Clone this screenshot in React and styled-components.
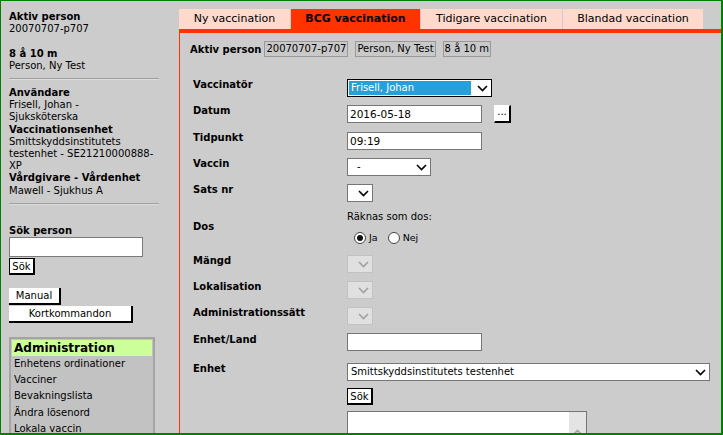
import React from 'react'
import styled, { createGlobalStyle } from 'styled-components'

const GlobalStyle = createGlobalStyle`
  html, body {
    margin: 0;
    padding: 0;
    background: #cccccc;
  }
  body {
    font-family: "DejaVu Sans", Verdana, sans-serif;
    font-size: 10px;
    color: #000;
  }
  * {
    box-sizing: border-box;
  }
`;

const tabs = [
  { label: 'Ny vaccination', w: 111 },
  { label: 'BCG vaccination', w: 129, active: true },
  { label: 'Tidigare vaccination', w: 141 },
  { label: 'Blandad vaccination', w: 140 },
];

const adminItems = [
  'Enhetens ordinationer',
  'Vacciner',
  'Bevakningslista',
  'Ändra lösenord',
  'Lokala vaccin',
];

function Chevron({ disabled }) {
  return (
    <ChevronSvg viewBox="0 0 11 7" $disabled={disabled}>
      <path d="M1 1 L5.5 5.5 L10 1" fill="none" stroke="currentColor" strokeWidth="1.6" />
    </ChevronSvg>
  );
}

function Select({ w, value, disabled, focused, pl }) {
  return (
    <SelectBox $w={w} $disabled={disabled} $focused={focused}>
      <SelectValue $focused={focused} $pl={pl}>{value}</SelectValue>
      <Chevron disabled={disabled} />
    </SelectBox>
  );
}

function Radio({ checked, label }) {
  return (
    <RadioLabel>
      <RadioDot $checked={checked} />
      {label}
    </RadioLabel>
  );
}

export default function App() {
  return (
    <>
      <GlobalStyle />
      <Frame>
        <Sidebar>
          <Block>
            <b>Aktiv person</b><br />
            20070707-p707<br />
            <br />
            <b>8 å 10 m</b><br />
            Person, Ny Test
          </Block>
          <Rule />
          <Block $mt={7}>
            <b>Användare</b><br />
            Frisell, Johan -<br />
            Sjuksköterska<br />
            <b>Vaccinationsenhet</b><br />
            Smittskyddsinstitutets<br />
            testenhet - SE21210000888-<br />
            XP<br />
            <b>Vårdgivare - Vårdenhet</b><br />
            Mawell - Sjukhus A
          </Block>
          <Rule />
          <Block $mt={20}>
            <b>Sök person</b>
          </Block>
          <SideInput type="text" />
          <SideButton $framed $w={26}>Sök</SideButton>
          <ButtonStack>
            <SideButton $w={52}>Manual</SideButton>
            <SideButton $w={124}>Kortkommandon</SideButton>
          </ButtonStack>
          <AdminBox>
            <AdminHeader>Administration</AdminHeader>
            {adminItems.map((item) => (
              <AdminItem key={item}>{item}</AdminItem>
            ))}
          </AdminBox>
        </Sidebar>

        <Main>
          <TabBar>
            {tabs.map((t) => (
              <Tab key={t.label} $w={t.w} $active={t.active}>{t.label}</Tab>
            ))}
          </TabBar>
          <Panel>
            <ActiveBar>
              <b>Aktiv person</b>
              <InfoBox $ml={3}>20070707-p707</InfoBox>
              <InfoBox $ml={7}>Person, Ny Test</InfoBox>
              <InfoBox $ml={7}>8 å 10 m</InfoBox>
            </ActiveBar>

            <Form>
              <Row $mt={0}>
                <Label>Vaccinatör</Label>
                <Field>
                  <Select w={145} value="Frisell, Johan" focused />
                </Field>
              </Row>
              <Row $mt={6}>
                <Label>Datum</Label>
                <Field>
                  <TextInput $w={135} defaultValue="2016-05-18" />
                  <DotsButton>...</DotsButton>
                </Field>
              </Row>
              <Row $mt={7}>
                <Label>Tidpunkt</Label>
                <Field>
                  <TextInput $w={135} defaultValue="09:19" />
                </Field>
              </Row>
              <Row $mt={6}>
                <Label>Vaccin</Label>
                <Field>
                  <Select w={84} value="-" pl={9} />
                </Field>
              </Row>
              <Row $mt={6}>
                <Label>Sats nr</Label>
                <Field>
                  <Select w={26} value="" />
                </Field>
              </Row>
              <Row $mt={5} $center>
                <Label $pt={0}>Dos</Label>
                <DosField>
                  <div>Räknas som dos:</div>
                  <RadioRow>
                    <Radio checked label="Ja" />
                    <Radio label="Nej" />
                  </RadioRow>
                </DosField>
              </Row>
              <Row $mt={6}>
                <Label>Mängd</Label>
                <Field>
                  <Select w={26} value="" disabled />
                </Field>
              </Row>
              <Row $mt={6}>
                <Label>Lokalisation</Label>
                <Field>
                  <Select w={26} value="" disabled />
                </Field>
              </Row>
              <Row $mt={6}>
                <Label>Administrationssätt</Label>
                <Field>
                  <Select w={26} value="" disabled />
                </Field>
              </Row>
              <Row $mt={7}>
                <Label>Enhet/Land</Label>
                <Field $pt={1}>
                  <TextInput $w={135} />
                </Field>
              </Row>
              <Row $mt={10}>
                <Label>Enhet</Label>
                <Field>
                  <Select w={363} value="Smittskyddsinstitutets testenhet" pl={3} />
                </Field>
              </Row>
              <Row $mt={4}>
                <Label />
                <Field>
                  <SideButton $framed $w={26}>Sök</SideButton>
                </Field>
              </Row>
              <Row $mt={4}>
                <Label />
                <Field>
                  <ListBox>
                    <ScrollTrack>
                      <ScrollArrow viewBox="0 0 9 6">
                        <path d="M1 5 L4.5 1.5 L8 5" fill="none" stroke="currentColor" strokeWidth="1.6" />
                      </ScrollArrow>
                    </ScrollTrack>
                  </ListBox>
                </Field>
              </Row>
            </Form>
          </Panel>
        </Main>
      </Frame>
    </>
  );
}

const Frame = styled.div`
  width: 723px;
  height: 435px;
  display: flex;
  overflow: hidden;
  background: #cccccc;
  border-top: 1px solid #008000;
  border-left: 1px solid #008000;
  border-right: 2px solid #008000;
  border-bottom: 2px solid #008000;
`;

const Sidebar = styled.div`
  width: 178px;
  flex-shrink: 0;
  padding: 10px 0 0 8px;
  line-height: 12.2px;
`;

const Block = styled.div`
  margin-top: ${(p) => p.$mt || 0}px;
  white-space: nowrap;
`;

const Rule = styled.div`
  width: 150px;
  height: 2px;
  margin-top: 6px;
  border-top: 1px solid #a0a0a0;
  border-bottom: 1px solid #dcdcdc;
`;

const SideInput = styled.input`
  display: block;
  width: 134px;
  height: 20px;
  margin: 0;
  border: 1px solid #7a7a7a;
  background: #fff;
  padding: 0 2px;
  font: inherit;
`;

const SideButton = styled.button`
  display: block;
  width: ${(p) => p.$w}px;
  height: 17px;
  margin: 1px 0 0;
  padding: 0;
  background: #fff;
  color: #000;
  font-family: "DejaVu Sans", Verdana, sans-serif;
  font-size: 10px;
  line-height: 13px;
  text-align: center;
  border-style: solid;
  border-color: ${(p) => (p.$framed ? '#000' : '#fff')};
  border-width: ${(p) => (p.$framed ? '1px' : '0')};
  border-right: 2px solid #000;
  border-bottom: 2px solid #000;
`;

const ButtonStack = styled.div`
  margin-top: 13px;
`;

const AdminBox = styled.div`
  width: 146px;
  margin-top: 14px;
  border: 2px solid #a4a4a4;
  background: #c2c2c2;
  padding: 1px;
`;

const AdminHeader = styled.div`
  height: 16px;
  background: #ccff99;
  font-size: 12px;
  font-weight: bold;
  line-height: 16px;
  padding-left: 2px;
`;

const AdminItem = styled.div`
  line-height: 16.2px;
  padding-left: 2px;
  white-space: nowrap;
`;

const Main = styled.div`
  flex: 1;
  min-width: 0;
  display: flex;
  flex-direction: column;
  padding-top: 8px;
`;

const TabBar = styled.div`
  display: flex;
  gap: 1px;
  height: 20px;
`;

const Tab = styled.div`
  width: ${(p) => p.$w}px;
  height: 20px;
  line-height: 20px;
  text-align: center;
  font-size: 11px;
  white-space: nowrap;
  background: ${(p) => (p.$active ? '#ff3300' : '#ffd9cc')};
  font-weight: ${(p) => (p.$active ? 'bold' : 'normal')};
`;

const Panel = styled.div`
  flex: 1;
  border-top: 4px solid #ff3300;
  border-left: 1px solid #ff3300;
  padding: 8px 0 0 10px;
`;

const ActiveBar = styled.div`
  display: flex;
  align-items: center;
  height: 16px;
  white-space: nowrap;
`;

const InfoBox = styled.span`
  margin-left: ${(p) => p.$ml}px;
  height: 16px;
  line-height: 14px;
  padding: 0 1px;
  border: 1px solid #999;
  background: #c9c9c9;
`;

const Form = styled.div`
  margin-top: 20px;
  padding-left: 3px;
`;

const Row = styled.div`
  display: grid;
  grid-template-columns: 154px 1fr;
  align-items: ${(p) => (p.$center ? 'center' : 'start')};
  margin-top: ${(p) => p.$mt}px;
`;

const Label = styled.div`
  font-weight: bold;
  line-height: 12px;
  padding-top: ${(p) => (p.$pt !== undefined ? p.$pt : 2)}px;
  white-space: nowrap;
`;

const Field = styled.div`
  display: flex;
  align-items: center;
  padding-top: ${(p) => (p.$pt !== undefined ? p.$pt : 2)}px;
`;

const DosField = styled.div`
  padding: 4px 0 3px;
  line-height: 12px;
`;

const RadioRow = styled.div`
  display: flex;
  align-items: center;
  margin-top: 8px;
  padding-left: 7px;
  height: 13px;
`;

const RadioLabel = styled.span`
  display: inline-flex;
  align-items: center;
  margin-right: 10px;
  font-size: 9.5px;
`;

const RadioDot = styled.span`
  width: 12px;
  height: 12px;
  border-radius: 50%;
  border: 1px solid #444;
  background: #fff;
  margin-right: 3px;
  display: inline-flex;
  align-items: center;
  justify-content: center;

  &::after {
    content: '';
    width: 6px;
    height: 6px;
    border-radius: 50%;
    background: ${(p) => (p.$checked ? '#111' : 'transparent')};
  }
`;

const TextInput = styled.input`
  width: ${(p) => p.$w}px;
  height: 18px;
  margin: 0;
  padding: 0 2px;
  border: 1px solid #767676;
  background: #fff;
  font-family: "DejaVu Sans", Verdana, sans-serif;
  font-size: 10.5px;
  color: #000;
`;

const DotsButton = styled.button`
  width: 17px;
  height: 18px;
  margin: 0 0 0 12px;
  padding: 0 0 3px;
  background: #fff;
  border: 1px solid #fff;
  border-right: 2px solid #000;
  border-bottom: 2px solid #000;
  font-family: "DejaVu Sans", Verdana, sans-serif;
  font-size: 10px;
  line-height: 10px;
  color: #000;
`;

const SelectBox = styled.div`
  width: ${(p) => p.$w}px;
  height: 18px;
  display: flex;
  align-items: stretch;
  padding: ${(p) => (p.$focused ? '1px 3px 1px 1px' : '0 3px 0 0')};
  border: 1px solid ${(p) => (p.$disabled ? '#c2c2c2' : p.$focused ? '#000' : '#767676')};
  background: ${(p) => (p.$disabled ? '#e0e0e0' : '#fff')};
  color: ${(p) => (p.$disabled ? '#9a9a9a' : '#000')};
`;

const SelectValue = styled.div`
  flex: 1;
  min-width: 0;
  margin-right: ${(p) => (p.$focused ? '6px' : '0')};
  padding-left: ${(p) => (p.$pl !== undefined ? p.$pl : 2)}px;
  background: ${(p) => (p.$focused ? '#26a0da' : 'transparent')};
  color: ${(p) => (p.$focused ? '#fff' : '#000')};
  line-height: ${(p) => (p.$focused ? '14px' : '16px')};
  white-space: nowrap;
  overflow: hidden;
`;

const ChevronSvg = styled.svg`
  width: 11px;
  height: 7px;
  align-self: center;
  flex-shrink: 0;
  color: ${(p) => (p.$disabled ? '#a0a0a0' : '#000')};
`;

const ListBox = styled.div`
  width: 240px;
  height: 70px;
  border: 1px solid #767676;
  background: #fff;
  display: flex;
  justify-content: flex-end;
`;

const ScrollTrack = styled.div`
  width: 17px;
  background: #e4e4e4;
  display: flex;
  justify-content: center;
  padding-top: 17px;
`;

const ScrollArrow = styled.svg`
  width: 9px;
  height: 6px;
  color: #a3a3a3;
`;
